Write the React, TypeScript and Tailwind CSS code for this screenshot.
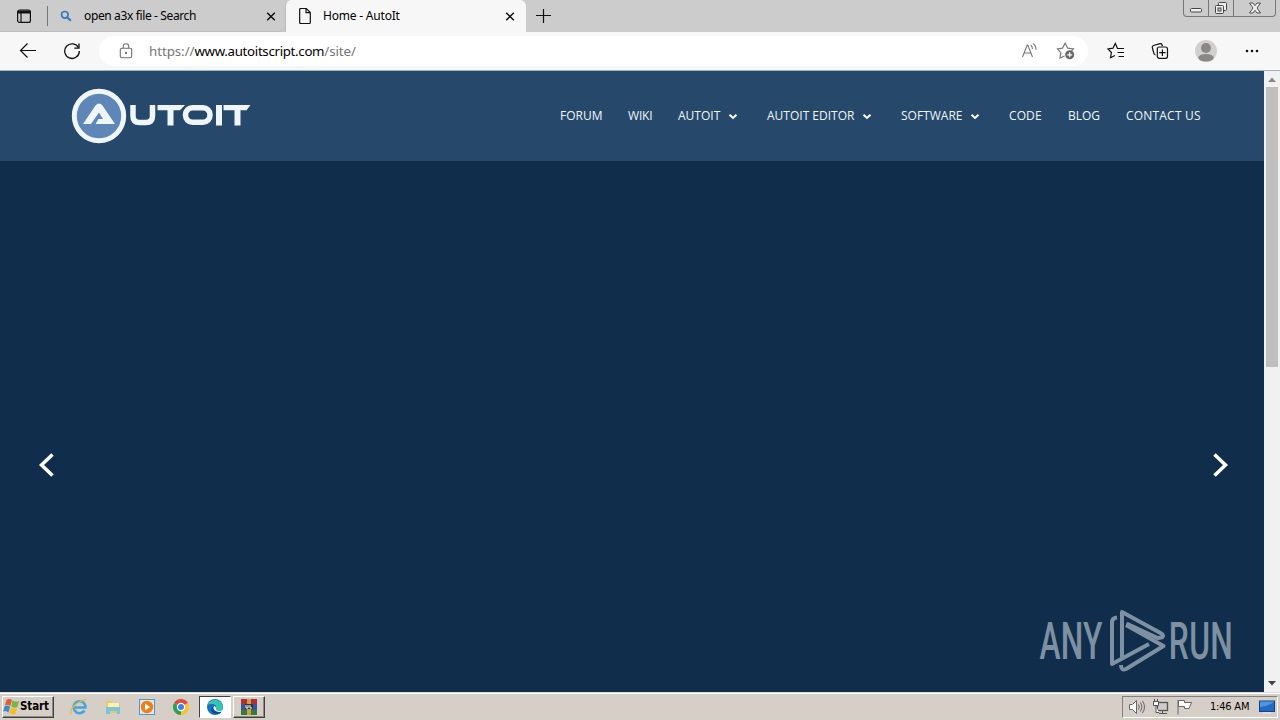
import type { ReactNode } from "react"

function TabBar() {
  return (
    <div className="flex h-8 bg-[#cccccc] text-[12px] leading-8 text-black font-['Noto_Sans',sans-serif]">
      <div className="flex w-[285px] items-center border-b border-[#bdbdbd] rounded-br-md">
        <svg viewBox="0 0 16 16" className="ml-4 w-4 h-4 shrink-0" fill="none" stroke="#111" strokeWidth="1.2">
          <rect x="1.6" y="2" width="12.8" height="12.4" rx="2" />
          <path d="M2 4h12" strokeWidth="3" />
          <path d="M5 5v9" />
        </svg>
        <div className="ml-[15px] h-5 w-px bg-[#777]" />
        <svg viewBox="0 0 12 12" className="ml-3 w-3 h-3 shrink-0" fill="none" stroke="#3479bd">
          <circle cx="4.8" cy="4.8" r="3.3" strokeWidth="1.7" />
          <path d="M7.2 7.2l3.6 3.6" strokeWidth="2" />
        </svg>
        <span className="ml-3 w-[181px] whitespace-nowrap tracking-[-0.37px]">open a3x file - Search</span>
        <CloseIcon />
      </div>
      <div className="flex w-[241px] items-center rounded-t-md bg-[#f7f7f7] border-l border-[#bbb]">
        <svg viewBox="0 0 14 18" className="ml-3 w-[14px] h-[18px] shrink-0" fill="none" stroke="#111" strokeWidth="1.2">
          <path d="M1.7 2.5q0-1 1-1h5.6l4 4v10q0 1-1 1H2.7q-1 0-1-1z" />
          <path d="M8 1.7v4h4" />
        </svg>
        <span className="ml-[11px] w-[181px] whitespace-nowrap tracking-[-0.2px]">Home - AutoIt</span>
        <CloseIcon />
      </div>
      <svg viewBox="0 0 16 16" className="ml-[9px] mt-2 w-4 h-4" stroke="#111" strokeWidth="1.2">
        <path d="M8.5 1v14M1 7.5h15" />
      </svg>
      <div className="ml-auto mr-[4px] flex h-[17px] w-[93px] rounded-b-[4px] border border-t-0 border-[#777]">
        <div className="flex w-[25px] justify-center border-r border-[#777]">
          <svg viewBox="0 0 14 16" className="w-[14px] h-4" fill="#eee" stroke="#444">
            <rect x="1.5" y="8.5" width="11" height="3.5" rx="1" />
          </svg>
        </div>
        <div className="flex w-[25px] justify-center border-r border-[#777]">
          <svg viewBox="0 0 14 16" className="w-[14px] h-4" fill="#eee" stroke="#444">
            <rect x="4.5" y="2.5" width="8" height="8" rx="1" />
            <rect x="1.5" y="5.5" width="8" height="8" rx="1" />
            <rect x="4" y="8" width="3" height="3" fill="#ccc" />
          </svg>
        </div>
        <div className="flex flex-1 justify-center">
          <svg viewBox="0 0 14 16" className="w-[14px] h-4" fill="#eee" stroke="#444" strokeWidth=".9">
            <path d="M1.5 3H5l2 2.7L9 3h3.5L9 8l3.5 5H9l-2-2.7L5 13H1.5L5 8z" />
          </svg>
        </div>
      </div>
    </div>
  )
}

function CloseIcon() {
  return (
    <svg viewBox="0 0 12 12" className="w-3 h-3 shrink-0" stroke="#111" strokeWidth="1.5">
      <path d="M2.2 2.7l7.6 7.6M9.8 2.7l-7.6 7.6" />
    </svg>
  )
}

function Toolbar() {
  return (
    <div className="flex h-[39px] items-center border-b border-[#9fb4bd] bg-[#f7f7f7]">
      <svg viewBox="0 0 18 18" className="ml-[19px] w-[18px] h-[18px]" fill="none" stroke="#111" strokeWidth="1.2">
        <path d="M17 8.5H1.5M8.5 1.5l-7 7 7 7" />
      </svg>
      <svg viewBox="0 0 18 18" className="ml-[26px] w-[18px] h-[18px]" fill="none" stroke="#111" strokeWidth="1.3">
        <path d="M15.5 5.8A7.3 7.3 0 1 0 16.3 9" />
        <path d="M16 1.5v4.7h-4.7" />
      </svg>
      <div className="ml-[18px] flex h-[30px] w-[989px] items-center rounded-full bg-white">
        <svg viewBox="0 0 14 16" className="ml-5 w-[14px] h-4" fill="none" stroke="#707070" strokeWidth="1.1">
          <rect x="1.3" y="5.3" width="11.4" height="9.5" rx="1.5" />
          <path d="M4.2 5V3.5a2.8 2.8 0 0 1 5.6 0V5" />
          <circle cx="7" cy="10" r=".6" fill="#707070" />
        </svg>
        <span className="ml-4 w-[872px] whitespace-nowrap pt-px text-[13.3px] tracking-[-0.05px] text-[#757575] font-['Noto_Sans',sans-serif]">
          https://<span className="text-black tracking-[-0.32px]">www.autoitscript.com</span>/site/
        </span>
        <svg viewBox="0 0 18 18" className="w-[18px] h-[18px]" fill="none" stroke="#777" strokeWidth="1.1">
          <path d="M1.5 15L6.2 3h.6l4.7 12M3.2 11h6.7" />
          <path d="M9.5 3q2 1.200 2 4M12 1.500q3 2 3 6.500" />
        </svg>
        <svg viewBox="0 0 20 20" className="ml-[17px] w-5 h-5" fill="none" stroke="#777" strokeWidth="1.2">
          <path d="M8.5 15L4 17l.8-5.4L1.500 8l5-.8L9.200 2l2.500 5.200 5.800.7-2 2" />
          <circle cx="13.7" cy="13.8" r="4.5" fill="#666" stroke="none" />
          <path d="M13.7 11.300v5M11.200 13.800h5" stroke="#fff" />
        </svg>
      </div>
      <svg viewBox="0 0 18 18" className="ml-[19px] w-[18px] h-[18px]" fill="none" stroke="#111" strokeWidth="1.2">
        <path d="M8 13.5l-4.5 2.2.9-5.2L1 7l5-.8 2.300-4.700L10.500 6.500H17M10.500 10.500H17M11.500 14.500H17" />
      </svg>
      <svg viewBox="0 0 18 18" className="ml-[26px] w-[18px] h-[18px]" fill="none" stroke="#111" strokeWidth="1.2">
        <path d="M4.500 13Q3 12.500 2.800 11L1.300 5.500Q1 4 2.500 3.500L9 1.700q1.500-.3 2 1L11.500 4" />
        <rect x="6.3" y="5" width="10.2" height="11.3" rx="2" />
        <path d="M11.4 7.500v6.400M8.200 10.700h6.400" />
      </svg>
      <svg viewBox="0 0 22 22" className="ml-[26px] w-[22px] h-[22px]">
        <circle cx="11" cy="11" r="11" fill="#d2d0ce" />
        <circle cx="11" cy="8" r="5" fill="#8a8886" />
        <ellipse cx="11" cy="17.7" rx="7.7" ry="3.8" fill="#8a8886" />
      </svg>
      <svg viewBox="0 0 16 4" className="ml-[27px] w-4 h-1" fill="#111">
        <circle cx="3" cy="2" r="1.3" />
        <circle cx="8" cy="2" r="1.3" />
        <circle cx="13" cy="2" r="1.3" />
      </svg>
    </div>
  )
}

function Logo() {
  return (
    <svg viewBox="0 0 184 56" className="ml-[71px] w-[184px] h-14">
      <circle cx="28" cy="28" r="24.7" fill="#5e87b8" stroke="#f0f5fa" strokeWidth="5" />
      <path d="M12 36L24.500 17.500q3.500-4 7 0L44 36H24.500l3-5H32l-4-6.500L20 36z" fill="#f0f5fa" />
      <g fill="none" stroke="#f0f5fa" strokeWidth="5.5">
        <path d="M62 17v11q0 6.500 6.500 6.500h6.500q6.500 0 6.500-6.500V17" />
        <rect x="114.5" y="19.7" width="24.5" height="14.6" rx="7" />
        <path d="M148 17v20.500" strokeWidth="6" />
      </g>
      <path d="M86.500 17H114l-5 5.200h-6.500v15.300h-6V22.200h-10zM152.500 17h27l-4 5.200h-6v15.300h-6V22.200h-11z" fill="#f0f5fa" />
    </svg>
  )
}

const Chevron = () => (
  <svg viewBox="0 0 10 8" className="ml-auto mr-[3px] mt-0.5 w-[10px] h-2" fill="none" stroke="#fff" strokeWidth="2">
    <path d="M1.500 1.700L5 5l3.500-3.300" />
  </svg>
)

function NavItem({ className, menu, children }: { className: string; menu?: boolean; children: ReactNode }) {
  return (
    <a className={`flex items-center whitespace-nowrap ${className}`}>
      {children}
      {menu && <Chevron />}
    </a>
  )
}

function SiteHeader() {
  return (
    <header className="flex h-[90px] items-center bg-[#26486a]">
      <Logo />
      <nav className="ml-auto mr-[63px] flex gap-[26px] text-[12px] text-[#eef6fb] font-['Open_Sans',sans-serif]">
        <NavItem className="w-[42px]">FORUM</NavItem>
        <NavItem className="w-6 tracking-[-0.2px]">WIKI</NavItem>
        <NavItem className="w-[63px]" menu>AUTOIT</NavItem>
        <NavItem className="w-[108px]" menu>AUTOIT EDITOR</NavItem>
        <NavItem className="w-[82px]" menu>SOFTWARE</NavItem>
        <NavItem className="w-[33px] tracking-[0.1px]">CODE</NavItem>
        <NavItem className="w-8">BLOG</NavItem>
        <NavItem className="w-[75px] tracking-[0.2px]">CONTACT US</NavItem>
      </nav>
    </header>
  )
}

function Watermark() {
  return (
    <svg
      viewBox="0 0 210 80"
      className="absolute right-[17px] bottom-[11px] w-[210px] h-20"
      fill="#7e91a3"
      fontFamily="Roboto, sans-serif"
      fontWeight="500"
      fontSize="52"
    >
      <g transform="scale(.61 1)">
        <text x="4" y="58" textLength="103">ANY</text>
        <text x="216" y="58" textLength="105">RUN</text>
      </g>
      <g fill="none" stroke="#7e91a3" strokeWidth="4" strokeLinejoin="round" transform="translate(-2 3)">
        <path d="M82 13.500q-5 .5-5 5V60l37-20" />
        <path d="M87 53V8l38.500 21q4.500 2.500 1 4.500l-4 .5L91.500 19.500" />
        <path d="M91 21l37.500 21L91 65q-5 2-5-4" />
      </g>
    </svg>
  )
}

function Scrollbar() {
  return (
    <div className="flex w-4 flex-col items-center bg-[#f1f1f1]">
      <svg viewBox="0 0 16 16" className="w-4 h-4 shrink-0">
        <path d="M4 11l4-4.500 4 4.500z" fill="#888" />
      </svg>
      <div className="h-[280px] w-3 bg-[#bfbfbf]" />
      <svg viewBox="0 0 16 16" className="mt-auto w-4 h-4 shrink-0">
        <path d="M4 5l4 4.500L12 5z" fill="#444" />
      </svg>
    </div>
  )
}

function Taskbar() {
  return (
    <div className="flex h-7 items-center border-t border-[#dedbd5] bg-[#d5cfc7] shadow-[inset_0_1px_0_#fff] font-['DejaVu_Sans_Condensed','DejaVu_Sans',sans-serif]">
      <div className="ml-0.5 flex h-[22px] w-[52px] items-center border border-t-white border-l-white border-b-[#404040] border-r-[#404040] shadow-[inset_-1px_-1px_0_#8d8a83]">
        <svg viewBox="0 0 17 17" className="w-[17px] h-[17px] shrink-0">
          <path d="M3.500 2Q6.500 0 9 2L7.300 8Q5 6 2 7.500z" fill="#e85b2b" />
          <path d="M9.500 2.500q3 2 6.500.5L14.300 9q-3 1.500-6-.5z" fill="#76b83f" />
          <path d="M1.700 8.300Q4.500 6.500 7 8.500l-1.500 6Q3 12 .1 13.500z" fill="#378ccf" />
          <path d="M8 9.200q3 2 6 .8L12.300 16Q9.500 17 6.500 15z" fill="#f5bd25" />
        </svg>
        <span className="pt-px text-[11.5px] font-bold text-black tracking-[-0.1px]">Start</span>
      </div>
      <svg viewBox="0 0 18 18" className="ml-4 w-[18px] h-[18px]" fill="none">
        <path d="M14.500 12.500A6 6 0 1 1 15.500 9.500H5" stroke="#45a5dd" strokeWidth="2.5" />
        <path d="M1 16.500Q-.5 10.500 7 5.500T16.500 2" stroke="#e7ba45" strokeWidth="1.3" />
      </svg>
      <svg viewBox="0 0 18 18" className="ml-4 w-[18px] h-[18px]">
        <path d="M2 3h5l1 2h8v10H2z" fill="#e8c967" />
        <path d="M4 5h11v4H4z" fill="#fff0a8" />
        <path d="M2 9h14v7h-3v-3H6v3H2z" fill="#7bc3df" />
      </svg>
      <svg viewBox="0 0 18 18" className="ml-4 w-[18px] h-[18px]">
        <rect x="1.5" y="1.5" width="15" height="15" fill="#d7e9f5" stroke="#5696c5" />
        <circle cx="9" cy="9" r="6.2" fill="#f17e14" />
        <path d="M7 5.500l5 3.500-5 3.500z" fill="#fff" />
      </svg>
      <svg viewBox="0 0 18 18" className="ml-4 w-[18px] h-[18px]">
        <path d="M9 9L2.070 5a8 8 0 0 1 13.860 0z" fill="#df4b3d" />
        <path d="M9 9L2.070 5A8 8 0 0 0 9 17z" fill="#2ba253" />
        <path d="M9 9l6.930-4A8 8 0 0 1 9 17z" fill="#f6c52b" />
        <circle cx="9" cy="9" r="4.2" fill="#fff" />
        <circle cx="9" cy="9" r="3" fill="#3b80e6" />
      </svg>
      <div className="ml-[9px] flex h-[22px] w-8 items-center justify-center border border-t-[#404040] border-l-[#404040] border-b-white border-r-white bg-white">
        <svg viewBox="0 0 18 18" className="w-[18px] h-[18px]">
          <circle cx="9" cy="9" r="8" fill="#1473bc" />
          <path d="M1.500 7A8 8 0 0 1 17 9q0 4-4 4-3.500 0-3-2 1-5-4-5-3 0-4.500 1z" fill="#35c3b5" />
          <path d="M8 8q-2 4 3 6 3 1 5-1l-2 2.500Q5 17 5.500 11 6 8 8 8z" fill="#0c4b9b" />
          <path d="M8.500 8q2 1 1.300 3 .7 2.500 4.200 2l3-1-1 1.500q-3 1-6-.5T7.500 9z" fill="#fff" />
        </svg>
      </div>
      <div className="ml-0.5 flex h-[22px] w-8 items-center justify-center border border-t-white border-l-white border-b-[#404040] border-r-[#404040] shadow-[inset_-1px_-1px_0_#8d8a83]">
        <svg viewBox="0 0 18 18" className="w-[18px] h-[18px]">
          <path d="M1 1h16v5H1z" fill="#b52c35" />
          <path d="M1 6h16v6H1z" fill="#3656a0" />
          <path d="M1 12h16v5H1z" fill="#397b35" />
          <path d="M7 1h4v16H7z" fill="#c6a348" />
          <path d="M5 6h8v5H5z" fill="#333" />
          <path d="M6 7v3h2V7M10 7v3h2" fill="none" stroke="#fff" />
        </svg>
      </div>
      <div className="ml-auto mr-0.5 flex h-[22px] w-[156px] items-center border border-t-[#808080] border-l-[#808080] border-b-white border-r-white">
        <svg viewBox="0 0 18 18" className="ml-[5px] w-[18px] h-[18px]" fill="#fff" stroke="#666">
          <path d="M1.500 6.500h3l4-4v13l-4-4h-3z" />
          <path d="M10.500 6.500q1.500 2.500 0 5M12.500 4.500q3 4.500 0 9M14.500 3q4 6 0 12" fill="none" />
        </svg>
        <svg viewBox="0 0 18 18" className="ml-[6px] w-[18px] h-[18px]" fill="#fff" stroke="#555">
          <rect x="5.5" y="4.5" width="10" height="8" fill="#ccc" strokeWidth="1.3" />
          <path d="M7 15.500h8M10.500 13v2" />
          <path d="M1.500 3.500h5v4h-5zM2.500 1v2M5.500 1v2M4 8v6.500h3" />
        </svg>
        <svg viewBox="0 0 18 18" className="ml-[6px] w-[18px] h-[18px]" fill="#fff" stroke="#666">
          <path d="M2 2v14.500M2.500 2.500h6v2h7l-2.500 6H8.500v-2h-6z" />
        </svg>
        <span className="ml-4 w-[42px] whitespace-nowrap pt-0.5 text-[11px] text-black tracking-[-0.2px]">1:46 AM</span>
        <svg viewBox="0 0 16 14" className="ml-[7px] w-4 h-[14px]">
          <rect x=".5" y="1" width="15" height="10.5" fill="#2369c5" stroke="#174481" />
          <path d="M1 7Q8 7 15 2v-.5H1z" fill="#4b98df" />
          <path d="M4 13h8" stroke="#eee" />
        </svg>
      </div>
    </div>
  )
}

export default function App() {
  return (
    <div className="flex h-[720px] w-[1280px] flex-col overflow-hidden">
      <TabBar />
      <Toolbar />
      <div className="flex h-[621px]">
        <div className="flex flex-1 flex-col">
          <SiteHeader />
          <main className="relative flex flex-1 items-center justify-between bg-[#102e4b] pt-[77px] pl-[38px] pr-[34px]">
            <svg viewBox="0 0 18 26" className="w-[18px] h-[26px]" fill="none" stroke="#fff" strokeWidth="3.5">
              <path d="M14.500 2.500L3.500 13l11 10.500" />
            </svg>
            <svg viewBox="0 0 18 26" className="w-[18px] h-[26px]" fill="none" stroke="#fff" strokeWidth="3.5">
              <path d="M2.500 2.500L13.500 13l-11 10.500" />
            </svg>
            <Watermark />
          </main>
        </div>
        <Scrollbar />
      </div>
      <Taskbar />
    </div>
  )
}
